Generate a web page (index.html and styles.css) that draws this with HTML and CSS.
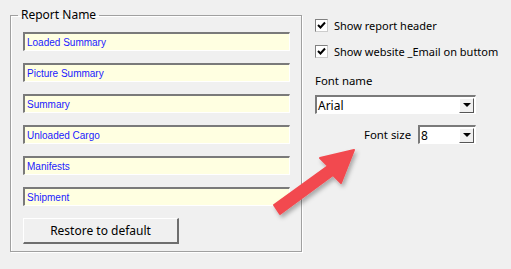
FILE: index.html
```html
<!DOCTYPE html>
<html lang="en">
<head>
  <meta charset="UTF-8">
  <title>Report settings</title>
  <link rel="stylesheet" href="styles.css">
</head>
<body>
  <div class="window">
    <fieldset class="group">
      <legend>Report Name</legend>
      <input class="name-box" type="text" value="Loaded Summary">
      <input class="name-box" type="text" value="Picture Summary">
      <input class="name-box" type="text" value="Summary">
      <input class="name-box" type="text" value="Unloaded Cargo">
      <input class="name-box" type="text" value="Manifests">
      <input class="name-box" type="text" value="Shipment">
      <button class="btn" type="button">Restore to default</button>
    </fieldset>

    <div class="options">
      <label class="check"><span class="box"><svg width="9" height="9" viewBox="0 0 9 9"><path d="M1 4 L3.5 6.5 L8 1.5" fill="none" stroke="#000" stroke-width="2"/></svg></span>Show report header</label>
      <label class="check"><span class="box"><svg width="9" height="9" viewBox="0 0 9 9"><path d="M1 4 L3.5 6.5 L8 1.5" fill="none" stroke="#000" stroke-width="2"/></svg></span>Show website _Email on buttom</label>

      <div class="field-label">Font name</div>
      <div class="combo combo-wide">
        <span class="combo-text">Arial</span>
        <span class="combo-btn"><span class="tri"></span></span>
      </div>

      <div class="size-row">
        <span class="size-label">Font size</span>
        <div class="combo combo-small">
          <span class="combo-text">8</span>
          <span class="combo-btn"><span class="tri"></span></span>
        </div>
      </div>
    </div>

    <!-- flecha roja encima -->
    <svg class="arrow" width="511" height="269" viewBox="0 0 511 269">
      <defs>
        <filter id="sh" x="-20%" y="-20%" width="140%" height="140%">
          <feDropShadow dx="2" dy="3" stdDeviation="2" flood-color="#000" flood-opacity="0.3"/>
        </filter>
      </defs>
      <path d="M280 214 L333 175 L341 183 L354 150 L320 158 L328 166 L274 205 Z" fill="#f24a4f" stroke="#f24a4f" stroke-width="2" stroke-linejoin="round" filter="url(#sh)"/>
    </svg>
  </div>
</body>
</html>
```

FILE: styles.css
```css
body {
  margin: 0;
  background-color: #f0f0f0;
  font-family: "Noto Sans", "Open Sans", sans-serif;
  font-size: 12px;
  color: #000;
}
.window {
  position: relative;
  width: 511px;
  height: 269px;
  display: flex;
  align-items: flex-start;
}
.group {
  margin: 8px 0 0 10px;
  width: 292px;
  min-width: 0;
  height: 244px;
  box-sizing: border-box;
  border: 1px solid #a0a0a0;
  box-shadow: inset 1px 1px 0 #fff, 1px 1px 0 #fff;
  padding: 10px 0 0 12px;
  display: flex;
  flex-direction: column;
  align-items: flex-start;
  gap: 12px;
}
.group legend {
  padding: 0 3px;
  margin-left: -5px;
  line-height: 14px;
  font-size: 12px;
}
.name-box {
  width: 267px;
  height: 19px;
  box-sizing: border-box;
  margin: 0;
  padding: 0 2px;
  background-color: #ffffe1;
  border-top: 2px solid #7a7a7a;
  border-left: 2px solid #7a7a7a;
  border-right: 1px solid #fff;
  border-bottom: 1px solid #fff;
  font-family: "Liberation Sans", Arial, sans-serif;
  font-size: 10px;
  color: #1a1aff;
  outline: none;
}
.btn {
  width: 156px;
  height: 26px;
  background-color: #f0f0f0;
  border-top: 1px solid #fff;
  border-left: 1px solid #fff;
  border-right: 2px solid #6e6e6e;
  border-bottom: 2px solid #6e6e6e;
  font-family: "Noto Sans", sans-serif;
  font-size: 12px;
  color: #000;
  padding: 0;
}
.options {
  margin: 18px 0 0 13px;
  display: flex;
  flex-direction: column;
  align-items: flex-start;
  font-size: 11.4px;
}
.check {
  display: flex;
  align-items: center;
  height: 14px;
  margin-bottom: 12px;
  white-space: nowrap;
  font-size: 11px;
}
.box {
  width: 11px;
  height: 11px;
  margin-right: 6px;
  background-color: #fff;
  border-top: 1px solid #808080;
  border-left: 1px solid #808080;
  border-right: 1px solid #ccc;
  border-bottom: 1px solid #ccc;
  display: flex;
  align-items: center;
  justify-content: center;
}
.field-label {
  margin-top: 4px;
  line-height: 14px;
}
.combo {
  position: relative;
  height: 19px;
  box-sizing: border-box;
  background-color: #fff;
  border-top: 2px solid #7a7a7a;
  border-left: 2px solid #7a7a7a;
  border-right: 1px solid #fff;
  border-bottom: 1px solid #fff;
  display: flex;
  align-items: center;
  justify-content: space-between;
}
.combo-wide {
  width: 161px;
  margin-top: 7px;
}
.combo-small {
  width: 58px;
}
.combo-text {
  padding-left: 1px;
  font-size: 12px;
}
.combo-btn {
  width: 15px;
  height: 15px;
  box-sizing: border-box;
  margin-right: 1px;
  background-color: #f0f0f0;
  border-top: 1px solid #fff;
  border-left: 1px solid #fff;
  border-right: 1px solid #555;
  border-bottom: 1px solid #555;
  display: flex;
  align-items: center;
  justify-content: center;
}
.tri {
  width: 0;
  height: 0;
  border-left: 4px solid transparent;
  border-right: 4px solid transparent;
  border-top: 4px solid #000;
}
.size-row {
  display: flex;
  align-items: center;
  margin: 11px 0 0 49px;
  gap: 7px;
}
.arrow {
  position: absolute;
  left: 0;
  top: 0;
  pointer-events: none;
}
```
